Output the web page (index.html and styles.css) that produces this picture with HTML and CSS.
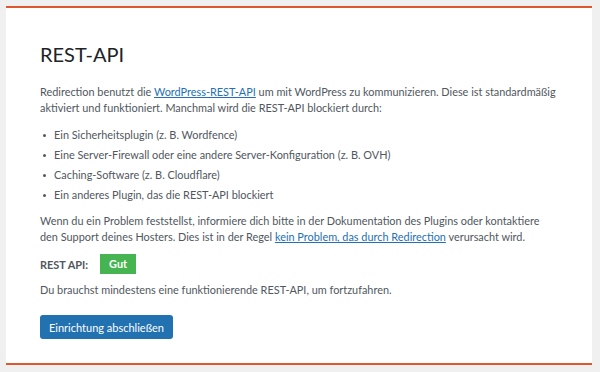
FILE: index.html
```html
<!DOCTYPE html>
<html lang="de">
<head>
    <meta charset="UTF-8">
    <meta name="viewport" content="width=device-width, initial-scale=1.0">
    <title>Redirection - REST-API</title>
    <link rel="stylesheet" href="styles.css">
</head>
<body>
    <div class="wizard">
        <h1>REST-API</h1>
        <p>Redirection benutzt die <a href="#">WordPress-REST-API</a> um mit WordPress zu kommunizieren. Diese ist standardmäßig aktiviert und funktioniert. Manchmal wird die REST-API blockiert durch:</p>

        <ul class="causes">
            <li>Ein Sicherheitsplugin (z. B. Wordfence)</li>
            <li>Eine Server-Firewall oder eine andere Server-Konfiguration (z. B. OVH)</li>
            <li>Caching-Software (z. B. Cloudflare)</li>
            <li>Ein anderes Plugin, das die REST-API blockiert</li>
        </ul>

        <p>Wenn du ein Problem feststellst, informiere dich bitte in der Dokumentation des Plugins oder kontaktiere den Support deines Hosters. Dies ist in der Regel <a href="#">kein Problem, das durch Redirection</a> verursacht wird.</p>

        <div class="api-status">
            <span class="api-label">REST API:</span>
            <span class="badge">Gut</span>
        </div>

        <p>Du brauchst mindestens eine funktionierende REST-API, um fortzufahren.</p>

        <button class="finish-btn">Einrichtung abschließen</button>
    </div>
</body>
</html>
```

FILE: styles.css
```css
* {
    margin: 0;
    padding: 0;
    box-sizing: border-box;
}

body {
    font-family: 'Lato', 'Open Sans', sans-serif;
    font-size: 10.9px;
    background: #f0f0f1;
    color: #50575e;
    padding: 6px 8px 0 6px;
}

.wizard {
    background: #fff;
    border-top: 2px solid #e0562f;
    border-bottom: 2px solid #e0562f;
    height: 359px;
    padding: 32px 34px 0;
}

h1 {
    font-size: 20px;
    font-weight: 400;
    color: #1d2327;
    line-height: 28px;
    margin-bottom: 16px;
}

p {
    line-height: 16px;
}

a {
    color: #2271b1;
}

.causes {
    list-style: none;
    margin: 9px 0 8px;
}

.causes li {
    position: relative;
    padding-left: 14px;
    line-height: 20px;
}

.causes li::before {
    content: '';
    position: absolute;
    left: 3px;
    top: 9px;
    width: 3px;
    height: 3px;
    border-radius: 50%;
    background: #50575e;
}

.api-status {
    display: flex;
    align-items: center;
    gap: 12px;
    margin: 9px 0 8px;
}

.api-label {
    font-weight: 700;
}

.badge {
    background: #46b450;
    color: #fff;
    font-weight: 700;
    padding: 0 9px;
    line-height: 20px;
}

.finish-btn {
    margin-top: 17px;
    background: #2271b1;
    color: #fff;
    border: none;
    border-radius: 3px;
    font-family: inherit;
    font-size: 11px;
    padding: 0 9px;
    height: 24px;
}
```
